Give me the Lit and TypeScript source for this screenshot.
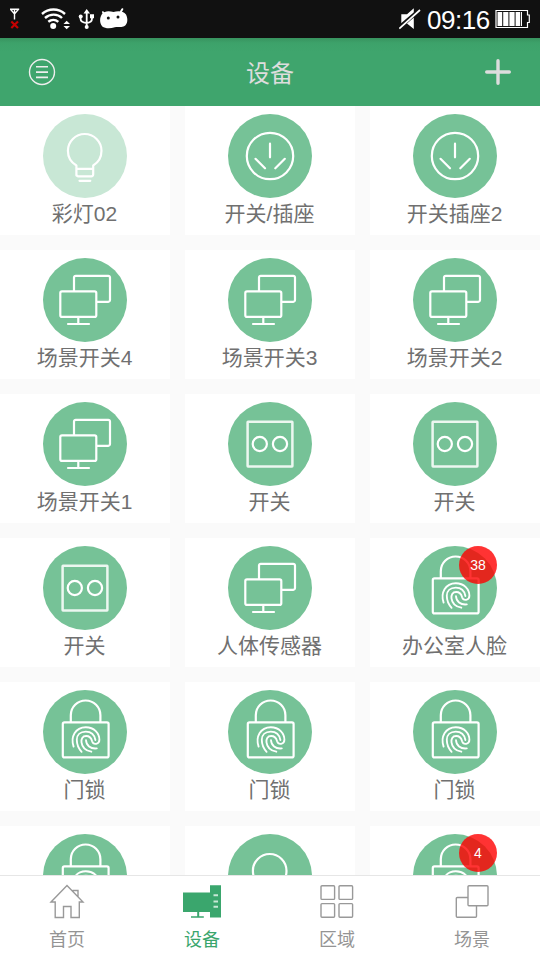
import { LitElement, html, svg, css } from "lit";
import { customElement, property } from "lit/decorators.js";

type Kind = "bulb" | "socket" | "screens" | "switch" | "lock";

const glyphs: Record<Kind, unknown> = {
  bulb: svg`<path d="M33.4 61.5V51.5C28.2 48.5 24.9 43 24.9 36.8a16.8 16.8 0 0 1 33.6 0c0 6.2-3.3 11.7-8.3 14.7V60.3a2 2 0 0 1-2 2H35.4a2 2 0 0 1-2-2M33.4 54.8H50.2M36.5 66.8H47.3"/>`,
  socket: svg`<circle cx="42" cy="42" r="23.2"/><path d="M42 29.7V43.3M27.5 44.8L37 54.3M56.8 44.8L47.3 54.3"/>`,
  screens: svg`<path d="M31 33V19.5A1.7 1.7 0 0 1 32.7 17.8H65.3A1.7 1.7 0 0 1 67 19.5V42.1A1.7 1.7 0 0 1 65.3 43.8H54"/><rect x="17.3" y="33.3" width="36" height="25.6" rx="1.7"/><path d="M35.3 59V66M25 66H46"/>`,
  switch: svg`<rect x="19.6" y="19.8" width="44.8" height="44.6" rx=".4" opacity=".86" stroke-width="2.5"/><circle cx="31.8" cy="42" r="7.1"/><circle cx="52" cy="42" r="7.1"/>`,
  lock: svg`<path d="M27.8 32V25.3a14.8 14.8 0 0 1 29.6 0V32"/><rect x="19.8" y="32.4" width="45.8" height="35" rx="1.7"/>
    <g stroke-width="1.85"><path d="M30.6 56.6C27.3 47 32.3 37.2 42.8 37.2C51.3 37.2 56.4 43.5 56.4 49.8C56.4 54.5 50.4 55.3 49.1 51.2C48.4 48.5 47 46 43.2 46C39.3 46 38.1 49 38.5 52.3C39.1 57.3 43.3 60.7 48.3 61.7"/><path d="M38.6 61.8C34.6 57.5 33.8 53.3 33.8 49.8C33.8 45 37.2 41.6 42.8 41.6C48.3 41.6 51.5 45 52.4 50"/><path d="M43 50.2C43.3 55.2 47.3 59.2 53.8 58.4"/></g>`,
};

@customElement("device-card")
class DeviceCard extends LitElement {
  @property() kind: Kind = "switch";
  @property() label = "";
  @property() badge = "";
  @property({ type: Boolean }) dim = false;

  static styles = css`
    :host { display: block; height: 129px; background: #fff; }
    .card { display: flex; flex-direction: column; align-items: center; padding-top: 8px; }
    .round { position: relative; width: 84px; height: 84px; border-radius: 50%; background: #76c297; }
    .round.dim { background: #c8e7d5; }
    svg { display: block; fill: none; stroke: #fff; stroke-width: 2.2; stroke-linecap: round; stroke-linejoin: round; }
    .badge { position: absolute; right: 0; top: 0; width: 38px; height: 38px; border-radius: 50%; background: rgba(255, 0, 0, 0.8); color: #fff; font-size: 14px; line-height: 38px; text-align: center; }
    .label { font-size: 21px; line-height: 32px; padding-right: 1px; color: #707070; white-space: nowrap; }
  `;

  render() {
    return html`<div class="card">
      <div class="round ${this.dim ? "dim" : ""}">
        <svg width="84" height="84" viewBox="0 0 84 84">${glyphs[this.kind]}</svg>
        ${this.badge ? html`<span class="badge">${this.badge}</span>` : ""}
      </div>
      <div class="label">${this.label}</div>
    </div>`;
  }
}

interface Device { kind: Kind; label: string; badge?: string; dim?: boolean }

const devices: Device[] = [
  { kind: "bulb", label: "彩灯02", dim: true },
  { kind: "socket", label: "开关/插座" },
  { kind: "socket", label: "开关插座2" },
  { kind: "screens", label: "场景开关4" },
  { kind: "screens", label: "场景开关3" },
  { kind: "screens", label: "场景开关2" },
  { kind: "screens", label: "场景开关1" },
  { kind: "switch", label: "开关" },
  { kind: "switch", label: "开关" },
  { kind: "switch", label: "开关" },
  { kind: "screens", label: "人体传感器" },
  { kind: "lock", label: "办公室人脸", badge: "38" },
  { kind: "lock", label: "门锁" },
  { kind: "lock", label: "门锁" },
  { kind: "lock", label: "门锁" },
  { kind: "lock", label: "" },
  { kind: "bulb", label: "" },
  { kind: "lock", label: "", badge: "4" },
];

const tabs = [
  { label: "首页", icon: svg`<path d="M1 18L17 1.5L33 18H29.3V33.5H21V22.5H13.5V33.5H5.2V18ZM22.5 6.5H28V12.5"/>` },
  { label: "设备", active: true, icon: svg`<g stroke="none" fill="#3aa66d"><path d="M-2 8.5H25V1.3H36V33.5H25V28H-2Z"/><path d="M12.2 28h2v4.3h4.6v1.4H6v-1.4h6.2z"/></g><path d="M28.5 11.2h4.5M28.5 17.4h4.5M28.5 22.8h4.5" stroke="#c8e8d6" stroke-width="2"/>` },
  { label: "区域", icon: svg`<rect x="1" y="1.8" width="13.6" height="13.6" rx="1"/><rect x="19" y="1.8" width="13.6" height="13.6" rx="1"/><rect x="1" y="19.6" width="13.6" height="13.6" rx="1"/><rect x="19" y="19.6" width="13.6" height="13.6" rx="1"/>` },
  { label: "场景", icon: svg`<path d="M13 13.5H2.3A1 1 0 0 0 1.3 14.5V32.3A1 1 0 0 0 2.3 33.3H20.5A1 1 0 0 0 21.5 32.3V22"/><rect x="13" y="1.8" width="20" height="20" rx="1"/>` },
];

@customElement("app-root")
class AppRoot extends LitElement {
  static styles = css`
    :host { display: flex; flex-direction: column; width: 540px; height: 960px; overflow: hidden; background: #fafafa; font-family: "Liberation Sans", "Noto Sans CJK SC", sans-serif; }
    svg { display: block; flex: none; }
    .status { flex: none; box-sizing: border-box; height: 38px; display: flex; align-items: center; background: #111; color: #fff; padding-right: 9px; }
    .clock { margin-left: auto; display: flex; align-items: center; }
    .time { font-size: 26px; line-height: 38px; letter-spacing: -0.45px; width: 63px; margin: 2px 5px 0 6px; white-space: nowrap; }
    .header { flex: none; box-sizing: border-box; height: 68px; padding: 0 28px; display: flex; align-items: center; justify-content: space-between; background: linear-gradient(#38935f, #3da26a 5px, #3fa56d 14px); }
    .title { font-size: 24px; line-height: 36px; padding-top: 3px; color: #ddd; }
    .grid { flex: 1; min-height: 0; overflow: hidden; display: grid; grid-template-columns: repeat(3, 170px); grid-auto-rows: 129px; gap: 15px; align-content: start; }
    .nav { flex: none; box-sizing: border-box; height: 85px; border-top: 1px solid #e6e6e6; display: grid; grid-template-columns: repeat(4, 1fr); background: #fff; }
    .tab { display: flex; flex-direction: column; align-items: center; padding: 8px 1px 0 0; font-size: 18px; line-height: 26px; color: #949494; }
    .tab svg { overflow: visible; fill: none; stroke: #999; stroke-width: 1.4; margin-bottom: 9px; }
    .tab.active { color: #3aa66d; }
  `;

  render() {
    return html`
      <div class="status">
        <svg width="140" height="38" viewBox="0 0 140 38" fill="none" stroke="#fff">
          <path d="M10 9.3H19.2M10.5 9.3L14.5 14L18.5 9.3M14.5 9V19.5" stroke-width="1.4"/>
          <path d="M11.3 21.5L18 28M18 21.5L11.3 28" stroke="#c40000" stroke-width="2.2"/>
          <g stroke-width="2.4"><path d="M42 14C48.5 8 58.5 8 65 14M45 18C50 13.5 57.5 13.5 62 18M48.3 21.8C51.3 19.4 55.5 19.4 58.3 21.8"/></g>
          <circle cx="53.2" cy="26" r="3" fill="#fff" stroke="none"/>
          <path d="M63.5 24L66.7 20.8L70 24ZM63.5 26L66.7 29.2L70 26Z" fill="#fff" stroke="none"/>
          <path d="M86.7 11V28M80.5 16.5V18.5Q80.5 22.5 86.7 23Q92 22.5 92 18.5V16" stroke-width="1.8"/>
          <path d="M83.5 13.5L86.7 9L90 13.5ZM90 14.3h4v4h-4z" fill="#fff" stroke="none"/>
          <circle cx="80.7" cy="16.5" r="2" fill="#fff" stroke="none"/><circle cx="86.7" cy="27" r="2" fill="#fff" stroke="none"/>
          <path d="M103 12.2L105.5 16M122.3 9.2L119.5 14" stroke-width="2" stroke-linecap="round"/>
          <path d="M102 14C104.5 10.5 109.5 10.8 113.5 12C118 10.6 123.5 11 126 14.5C128.3 19 127.6 24.2 124.5 26C121 28 118 26.2 114.8 27.3C110 28.8 105 28.5 102.3 26.5C99.3 23 99.6 17.5 102 14Z" fill="#fff" stroke="none"/>
          <circle cx="108.3" cy="18" r="1.5" fill="#111" stroke="none"/><circle cx="118" cy="17" r="1.5" fill="#111" stroke="none"/>
        </svg>
        <div class="clock">
          <svg width="22" height="38" viewBox="0 0 22 38">
            <path d="M2.3 14.3H8L14.8 8.2V29L8 23.5H2.3Z" fill="#fff"/>
            <path d="M-1 28.6L21.5 9.3" stroke="#111" stroke-width="4"/>
            <path d="M.3 28.6L21 10" stroke="#fff" stroke-width="1.7"/>
          </svg>
          <span class="time">09:16</span>
          <svg width="36" height="38" viewBox="0 0 36 38">
            <path d="M1 10.5H32.5V15H34.3V22.5H32.5V27.5H1Z" fill="none" stroke="#fff" stroke-width="1.2"/>
            <path d="M2.5 12h4.7v14H2.5zM8.2 12h5.2v14H8.2zM14.4 12h5.2v14h-5.2zM20.6 12h4.6v14h-4.6zM26 12h1v14h-1z" fill="#fff"/>
          </svg>
        </div>
      </div>
      <div class="header">
        <svg width="28" height="28" viewBox="0 0 28 28" fill="none" stroke="#eee" stroke-width="1.4">
          <circle cx="14" cy="14" r="12.5"/><path d="M8 8.7H20M8 14.1H20M8 19.4H20" stroke-width="1.6"/>
        </svg>
        <div class="title">设备</div>
        <svg width="28" height="28" viewBox="0 0 28 28" stroke="#ddd" stroke-width="3.4" stroke-linecap="round">
          <path d="M2.7 14H25.3M14 2.7V25.3"/>
        </svg>
      </div>
      <div class="grid">
        ${devices.map((d) => html`<device-card .kind=${d.kind} .label=${d.label} .badge=${d.badge ?? ""} .dim=${d.dim ?? false}></device-card>`)}
      </div>
      <div class="nav">
        ${tabs.map((t) => html`<div class="tab ${t.active ? "active" : ""}"><svg width="34" height="34" viewBox="0 0 34 34">${t.icon}</svg>${t.label}</div>`)}
      </div>`;
  }
}
